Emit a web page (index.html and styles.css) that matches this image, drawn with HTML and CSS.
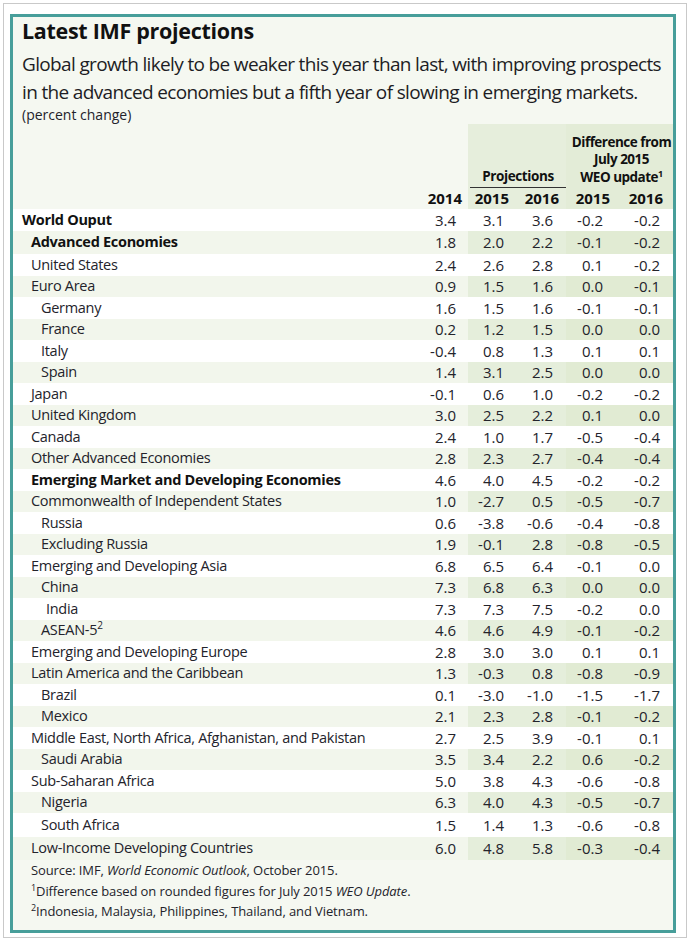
FILE: index.html
```html
<!DOCTYPE html>
<html lang="en">
<head>
<meta charset="utf-8">
<title>Latest IMF projections</title>
<link rel="stylesheet" href="styles.css">
</head>
<body>
<div class="frame">
  <div class="box">
    <h1 class="title">Latest IMF projections</h1>
    <p class="subtitle">Global growth likely to be weaker this year than last, with improving prospects in the advanced economies but a fifth year of slowing in emerging markets.</p>
    <p class="unit">(percent change)</p>
    <table class="data">
      <colgroup>
        <col class="c-label"><col class="c-2014"><col class="c-p"><col class="c-p"><col class="c-d1"><col class="c-d2">
      </colgroup>
      <thead>
        <tr class="h1">
          <th class="lab"></th>
          <th class="y14"></th>
          <th class="proj" colspan="2"><div class="proj-label">Projections</div></th>
          <th class="diff" colspan="2">Difference from<br>July 2015<br>WEO update<sup>1</sup></th>
        </tr>
        <tr class="h2">
          <th class="lab"></th>
          <th class="y14 num">2014</th>
          <th class="g num">2015</th>
          <th class="g num">2016</th>
          <th class="gd num">2015</th>
          <th class="gd num">2016</th>
        </tr>
      </thead>
      <tbody>
        <tr><td class="lab l0 b">World Ouput</td><td>3.4</td><td>3.1</td><td>3.6</td><td>-0.2</td><td>-0.2</td></tr>
        <tr class="tall"><td class="lab l1 b">Advanced Economies</td><td>1.8</td><td>2.0</td><td>2.2</td><td>-0.1</td><td>-0.2</td></tr>
        <tr><td class="lab l1">United States</td><td>2.4</td><td>2.6</td><td>2.8</td><td>0.1</td><td>-0.2</td></tr>
        <tr><td class="lab l1">Euro Area</td><td>0.9</td><td>1.5</td><td>1.6</td><td>0.0</td><td>-0.1</td></tr>
        <tr><td class="lab l2">Germany</td><td>1.6</td><td>1.5</td><td>1.6</td><td>-0.1</td><td>-0.1</td></tr>
        <tr><td class="lab l2">France</td><td>0.2</td><td>1.2</td><td>1.5</td><td>0.0</td><td>0.0</td></tr>
        <tr><td class="lab l2">Italy</td><td>-0.4</td><td>0.8</td><td>1.3</td><td>0.1</td><td>0.1</td></tr>
        <tr><td class="lab l2">Spain</td><td>1.4</td><td>3.1</td><td>2.5</td><td>0.0</td><td>0.0</td></tr>
        <tr><td class="lab l1">Japan</td><td>-0.1</td><td>0.6</td><td>1.0</td><td>-0.2</td><td>-0.2</td></tr>
        <tr><td class="lab l1">United Kingdom</td><td>3.0</td><td>2.5</td><td>2.2</td><td>0.1</td><td>0.0</td></tr>
        <tr><td class="lab l1">Canada</td><td>2.4</td><td>1.0</td><td>1.7</td><td>-0.5</td><td>-0.4</td></tr>
        <tr><td class="lab l1">Other Advanced Economies</td><td>2.8</td><td>2.3</td><td>2.7</td><td>-0.4</td><td>-0.4</td></tr>
        <tr><td class="lab l1 b">Emerging Market and Developing Economies</td><td>4.6</td><td>4.0</td><td>4.5</td><td>-0.2</td><td>-0.2</td></tr>
        <tr><td class="lab l1">Commonwealth of Independent States</td><td>1.0</td><td>-2.7</td><td>0.5</td><td>-0.5</td><td>-0.7</td></tr>
        <tr><td class="lab l2">Russia</td><td>0.6</td><td>-3.8</td><td>-0.6</td><td>-0.4</td><td>-0.8</td></tr>
        <tr><td class="lab l2">Excluding Russia</td><td>1.9</td><td>-0.1</td><td>2.8</td><td>-0.8</td><td>-0.5</td></tr>
        <tr><td class="lab l1">Emerging and Developing Asia</td><td>6.8</td><td>6.5</td><td>6.4</td><td>-0.1</td><td>0.0</td></tr>
        <tr><td class="lab l2">China</td><td>7.3</td><td>6.8</td><td>6.3</td><td>0.0</td><td>0.0</td></tr>
        <tr><td class="lab l2x">India</td><td>7.3</td><td>7.3</td><td>7.5</td><td>-0.2</td><td>0.0</td></tr>
        <tr><td class="lab l2">ASEAN-5<sup class="fn">2</sup></td><td>4.6</td><td>4.6</td><td>4.9</td><td>-0.1</td><td>-0.2</td></tr>
        <tr><td class="lab l1">Emerging and Developing Europe</td><td>2.8</td><td>3.0</td><td>3.0</td><td>0.1</td><td>0.1</td></tr>
        <tr><td class="lab l1">Latin America and the Caribbean</td><td>1.3</td><td>-0.3</td><td>0.8</td><td>-0.8</td><td>-0.9</td></tr>
        <tr><td class="lab l2">Brazil</td><td>0.1</td><td>-3.0</td><td>-1.0</td><td>-1.5</td><td>-1.7</td></tr>
        <tr><td class="lab l2">Mexico</td><td>2.1</td><td>2.3</td><td>2.8</td><td>-0.1</td><td>-0.2</td></tr>
        <tr><td class="lab l1">Middle East, North Africa, Afghanistan, and Pakistan</td><td>2.7</td><td>2.5</td><td>3.9</td><td>-0.1</td><td>0.1</td></tr>
        <tr><td class="lab l2">Saudi Arabia</td><td>3.5</td><td>3.4</td><td>2.2</td><td>0.6</td><td>-0.2</td></tr>
        <tr><td class="lab l1">Sub-Saharan Africa</td><td>5.0</td><td>3.8</td><td>4.3</td><td>-0.6</td><td>-0.8</td></tr>
        <tr><td class="lab l2">Nigeria</td><td>6.3</td><td>4.0</td><td>4.3</td><td>-0.5</td><td>-0.7</td></tr>
        <tr class="tall"><td class="lab l2">South Africa</td><td>1.5</td><td>1.4</td><td>1.3</td><td>-0.6</td><td>-0.8</td></tr>
        <tr class="tall"><td class="lab l1">Low-Income Developing Countries</td><td>6.0</td><td>4.8</td><td>5.8</td><td>-0.3</td><td>-0.4</td></tr>
      </tbody>
    </table>
    <div class="notes">
      <p>Source: IMF, <em>World Economic Outlook</em>, October 2015.</p>
      <p><sup>1</sup>Difference based on rounded figures for July 2015 <em>WEO Update</em>.</p>
      <p><sup>2</sup>Indonesia, Malaysia, Philippines, Thailand, and Vietnam.</p>
    </div>
  </div>
</div>
</body>
</html>
```

FILE: styles.css
```css
html, body {
  margin: 0;
  padding: 0;
  background: #ffffff;
}

body {
  font-family: "Open Sans", "DejaVu Sans Condensed", sans-serif;
  color: #23232b;
}

.frame {
  margin: 3px;
  border: 1px solid #c9c9c9;
  padding: 10px 10px 4px 6px;
}

.box {
  border: 3px solid #479e9a;
  background: #f5f8f1;
  padding: 0 0 8px 0;
}

.title {
  margin: 0;
  padding-left: 9px;
  font-size: 21.5px;
  line-height: 28px;
  letter-spacing: -0.3px;
  font-weight: bold;
  color: #111;
}

.subtitle {
  margin: 5px 0 0 0;
  padding-left: 9px;
  font-size: 19px;
  line-height: 28px;
  letter-spacing: -0.65px;
  color: #1d1d24;
}

.unit {
  margin: 0;
  padding-left: 9px;
  font-size: 14px;
  line-height: 18px;
}

.data {
  width: 100%;
  table-layout: fixed;
  border-collapse: separate;
  border-spacing: 0;
  font-size: 15px;
}

.c-label { width: 405px; }
.c-2014 { width: 50px; }
.c-p { width: 49px; }
.c-d1 { width: 53px; }
.c-d2 { width: 54px; }

.data th {
  font-weight: bold;
  color: #111;
  padding: 0;
}

.h1 th {
  height: 62px;
  vertical-align: bottom;
}

.h1 .proj {
  background: #e6eedc;
  padding: 0 0 0 2px;
}

.proj-label {
  font-size: 13.5px;
  line-height: 17px;
  letter-spacing: -0.4px;
  text-align: center;
  padding-bottom: 2px;
  border-bottom: 1.5px solid #333;
}

.h1 .diff {
  background: #e3ecd7;
  font-size: 13.5px;
  line-height: 17.5px;
  letter-spacing: -0.5px;
  text-align: center;
  padding: 0 0 2px 4px;
  white-space: nowrap;
}

.diff sup {
  font-size: 9px;
  line-height: 0;
  vertical-align: 5px;
}

.h2 th {
  height: 21px;
  font-size: 15px;
  line-height: 21px;
  text-align: right;
}

.h2 .y14 { padding-right: 6px; }
.h2 .g { background: #e6eedc; padding-right: 8px; }
.h2 .gd { background: #e3ecd7; padding-right: 9px; }
.h2 .g + .g { padding-right: 7px; }
.h2 .gd + .gd { padding-right: 10px; }

.data td {
  height: 21.5px;
  padding: 0;
  line-height: 18px;
  vertical-align: middle;
  text-align: right;
  background: #ffffff;
  white-space: nowrap;
}

.data tbody tr.tall td { height: 23.5px; }

.data td:nth-child(2) { padding-right: 12px; }
.data td:nth-child(3) { padding-right: 13px; }
.data td:nth-child(4) { padding-right: 13px; }
.data td:nth-child(5) { padding-right: 16px; }
.data td:nth-child(6) { padding-right: 13px; }

.data tbody tr:nth-child(even) td { background: #f2f6ec; }
.data tbody tr:nth-child(even) td:nth-child(3),
.data tbody tr:nth-child(even) td:nth-child(4) { background: #e5eedb; }
.data tbody tr:nth-child(even) td:nth-child(5),
.data tbody tr:nth-child(even) td:nth-child(6) { background: #e1ebd3; }

.data td.lab {
  text-align: left;
  font-size: 14.5px;
  letter-spacing: -0.3px;
}
.data td.l0 { padding-left: 9px; }
.data td.l1 { padding-left: 18px; }
.data td.l2 { padding-left: 28px; }
.data td.l2x { padding-left: 33px; }
.data td.b { font-weight: bold; color: #111; }

.fn {
  font-size: 10px;
  line-height: 0;
  vertical-align: 6px;
}

.notes {
  padding: 0 0 0 18px;
  font-size: 13px;
  line-height: 20.5px;
  letter-spacing: -0.1px;
}

.notes p { margin: 0; }

.notes sup {
  font-size: 9px;
  line-height: 0;
  vertical-align: 5px;
}
```
